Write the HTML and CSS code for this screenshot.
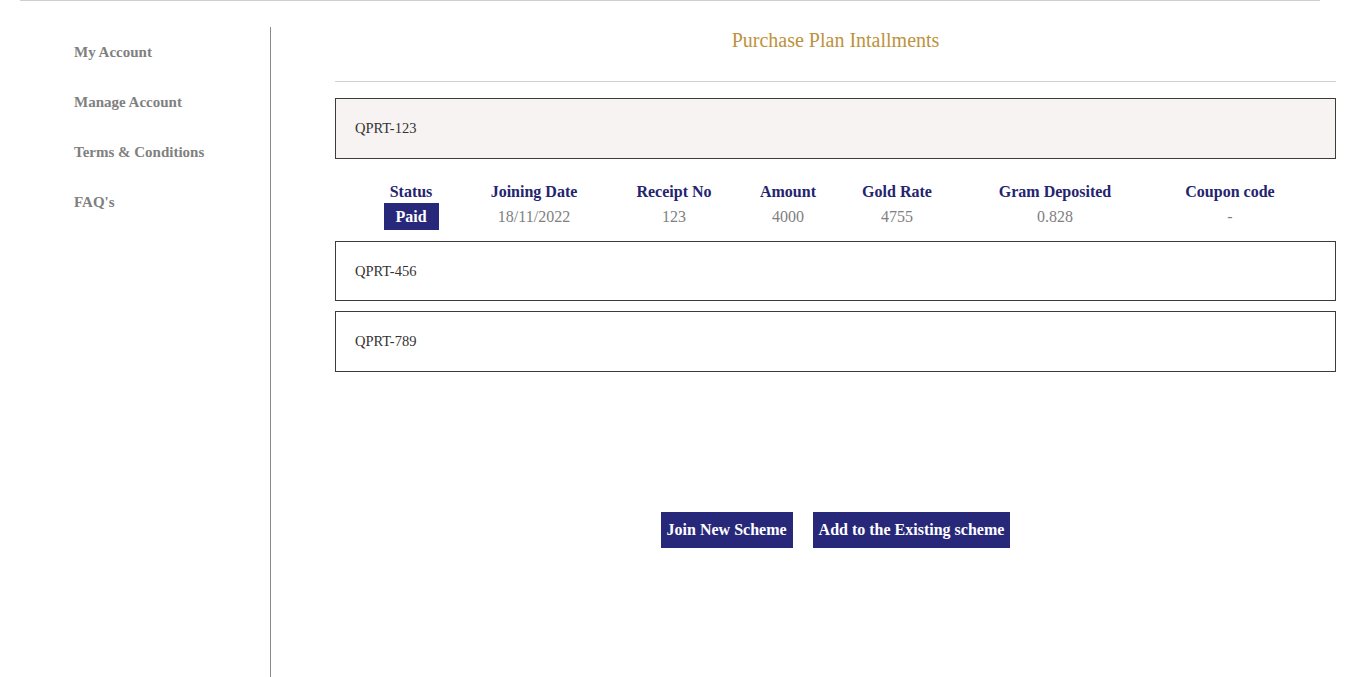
FILE: index.html
```html
<!DOCTYPE html>
<html lang="en">
<head>
<meta charset="utf-8">
<title>Purchase Plan Intallments</title>
<link rel="stylesheet" href="styles.css">
</head>
<body>
<div class="topline"></div>
<div class="layout">
  <aside class="sidebar">
    <a class="side-link" href="#">My Account</a>
    <a class="side-link" href="#">Manage Account</a>
    <a class="side-link" href="#">Terms &amp; Conditions</a>
    <a class="side-link" href="#">FAQ's</a>
  </aside>
  <main class="main">
    <h1 class="title">Purchase Plan Intallments</h1>
    <hr class="divider">
    <div class="plan plan-active">QPRT-123</div>
    <div class="details">
      <div class="grid head">
        <div>Status</div>
        <div>Joining Date</div>
        <div>Receipt No</div>
        <div>Amount</div>
        <div>Gold Rate</div>
        <div>Gram Deposited</div>
        <div>Coupon code</div>
      </div>
      <div class="grid vals">
        <div><span class="badge">Paid</span></div>
        <div>18/11/2022</div>
        <div>123</div>
        <div>4000</div>
        <div>4755</div>
        <div>0.828</div>
        <div>-</div>
      </div>
    </div>
    <div class="plan">QPRT-456</div>
    <div class="plan plan-gap">QPRT-789</div>
    <div class="actions">
      <button class="btn">Join New Scheme</button>
      <button class="btn">Add to the Existing scheme</button>
    </div>
  </main>
</div>
</body>
</html>
```

FILE: styles.css
```css
* { box-sizing: border-box; }
html, body { margin: 0; padding: 0; background: #fff; }
body {
  font-family: "Liberation Serif", "Times New Roman", serif;
  color: #333;
}
.topline {
  margin-left: 20px;
  width: 1300px;
  height: 1px;
  background: #cfcfcf;
}
.layout {
  display: flex;
  margin-top: 26px;
  min-height: 650px;
}
.sidebar {
  width: 271px;
  flex: none;
  border-right: 1px solid #8a8a8a;
  padding-left: 74px;
  display: flex;
  flex-direction: column;
}
.side-link {
  display: block;
  height: 50px;
  line-height: 50px;
  font-size: 15px;
  font-weight: bold;
  color: #808080;
  text-decoration: none;
}
.main {
  flex: 1;
  padding: 0 30px 0 64px;
}
.title {
  margin: 0;
  height: 26px;
  line-height: 26px;
  font-size: 20px;
  font-weight: normal;
  text-align: center;
  color: #bd923c;
}
.divider {
  margin: 28px 0 0;
  border: 0;
  height: 1px;
  background: #d0d0d0;
}
.plan {
  height: 60px;
  border: 1px solid #3c3c3c;
  padding-left: 19px;
  display: flex;
  align-items: center;
  font-size: 14.5px;
  color: #333;
}
.plan-active {
  margin-top: 16px;
  height: 61px;
  background: #f6f3f2;
}
.plan-gap { margin-top: 10px; height: 61px; }
.details {
  padding: 22px 20px 11px;
  display: flex;
  flex-direction: column;
  gap: 0;
}
.grid {
  display: grid;
  grid-template-columns: 112px 134px 146px 82px 136px 180px 170px;
  text-align: center;
  font-size: 16px;
}
.head {
  height: 22px;
  line-height: 22px;
  font-weight: bold;
  color: #24246f;
}
.vals {
  height: 27px;
  align-items: center;
  color: #808080;
}
.badge {
  display: inline-block;
  width: 55px;
  height: 27px;
  line-height: 27px;
  background: #28287a;
  color: #fff;
  font-weight: bold;
}
.actions {
  margin-top: 140px;
  display: flex;
  justify-content: center;
  gap: 20px;
}
.btn {
  height: 36px;
  padding: 0 6px;
  border: 0;
  background: #28287a;
  color: #fff;
  font-family: "Liberation Serif", "Times New Roman", serif;
  font-size: 16px;
  font-weight: bold;
  cursor: pointer;
}
```
